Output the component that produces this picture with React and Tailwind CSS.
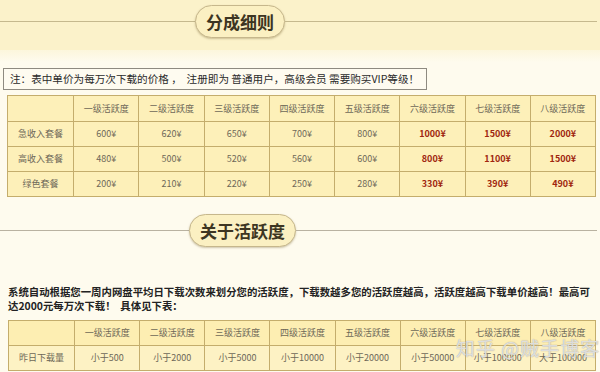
const levels = ['一级活跃度', '二级活跃度', '三级活跃度', '四级活跃度', '五级活跃度', '六级活跃度', '七级活跃度', '八级活跃度'];

const priceRows = [
  { name: '急收入套餐', normal: ['600', '620', '650', '700', '800'], vip: ['1000', '1500', '2000'] },
  { name: '高收入套餐', normal: ['480', '500', '520', '560', '600'], vip: ['800', '1100', '1500'] },
  { name: '绿色套餐', normal: ['200', '210', '220', '250', '280'], vip: ['330', '390', '490'] },
];

const downloads = ['小于500', '小于2000', '小于5000', '小于10000', '小于20000', '小于50000', '小于100000', '大于100000'];

const cjk = { fontFamily: '"Noto Sans CJK SC", "Liberation Sans", sans-serif' };

function Pill({ children }) {
  return (
    <div className="shrink-0 rounded-full border border-[#c6b78c] bg-[#fbf0c2] px-[10px] h-[33px] flex items-center text-[17px] font-bold text-[#3d3522] shadow-[0_1px_2px_rgba(120,100,50,0.35)]">
      {children}
    </div>
  );
}

function Heading({ left, title, line }) {
  return (
    <div className="flex items-center">
      <div className={`h-px ${line}`} style={{ width: left }} />
      <Pill>{title}</Pill>
      <div className={`h-px flex-1 mr-[3px] ${line}`} />
    </div>
  );
}

const cell = 'border border-[#c4ad6c] text-center text-[9px] text-[#6e6858] font-normal p-0';

export default function App() {
  return (
    <div className="w-[600px] h-[372px] overflow-hidden bg-[#fefbee]" style={cjk}>
      <div className="bg-[#fbf2ca] pt-[5px] h-[50px]">
        <Heading left={195} title="分成细则" line="bg-[#c5b98e]" />
      </div>
      <div className="h-[12px] bg-gradient-to-b from-[#fcf6dc] to-[#fefbee]" />

      <div className="ml-[3px] mt-[6px] w-[424px] h-[22px] border border-[#8e8a80] bg-[#fefbf0] flex items-center pl-[6px] text-[10.6px] text-[#2a2a2a] whitespace-nowrap">
        注：表中单价为每万次下载的价格 ， &nbsp;注册即为 普通用户，高级会员 需要购买VIP等级！
      </div>

      <table className="ml-[7px] mt-[5px] border-collapse bg-[#fdf0b9] table-fixed w-[589px]">
        <colgroup>
          <col className="w-[66px]" />
          {levels.map((l) => (
            <col key={l} className="w-[65px]" />
          ))}
        </colgroup>
        <thead>
          <tr className="h-[26px]">
            <th className={cell}></th>
            {levels.map((l) => (
              <th key={l} className={cell}>{l}</th>
            ))}
          </tr>
        </thead>
        <tbody>
          {priceRows.map((r) => (
            <tr key={r.name} className="h-[25px]">
              <td className={cell}>{r.name}</td>
              {r.normal.map((p, i) => (
                <td key={i} className={cell}>{p}¥</td>
              ))}
              {r.vip.map((p, i) => (
                <td key={i} className={`${cell} !text-[#a0260f] !font-bold`}>{p}¥</td>
              ))}
            </tr>
          ))}
        </tbody>
      </table>

      <div className="mt-[17px]">
        <Heading left={189} title="关于活跃度" line="bg-[#b9b2a1]" />
      </div>

      <p className="mt-[38px] pl-[8px] text-[10.4px] leading-[13.5px] font-bold text-[#222] whitespace-nowrap">
        系统自动根据您一周内网盘平均日下载次数来划分您的活跃度，下载数越多您的活跃度越高，活跃度越高下载单价越高！最高可
        <br />
        达2000元每万次下载！ &nbsp;具体见下表：
      </p>

      <div className="relative">
        <table className="ml-[8px] mt-[8px] border-collapse bg-[#fdeeb2] table-fixed w-[588px]">
          <colgroup>
            <col className="w-[66px]" />
            {levels.map((l) => (
              <col key={l} className="w-[65px]" />
            ))}
          </colgroup>
          <tbody>
            <tr className="h-[25px]">
              <td className={cell}></td>
              {levels.map((l) => (
                <td key={l} className={cell}>{l}</td>
              ))}
            </tr>
            <tr className="h-[25px] bg-[#fdf2c4]">
              <td className={cell}>昨日下载量</td>
              {downloads.map((d) => (
                <td key={d} className={cell}>{d}</td>
              ))}
            </tr>
          </tbody>
        </table>
        <div
          className="absolute left-[456px] top-[14px] text-[19px] text-white/70 whitespace-nowrap tracking-[1px]"
          style={{ textShadow: '0 0 1px #8a8a8a' }}
        >
          知乎 @贼手博客
        </div>
      </div>
    </div>
  );
}
